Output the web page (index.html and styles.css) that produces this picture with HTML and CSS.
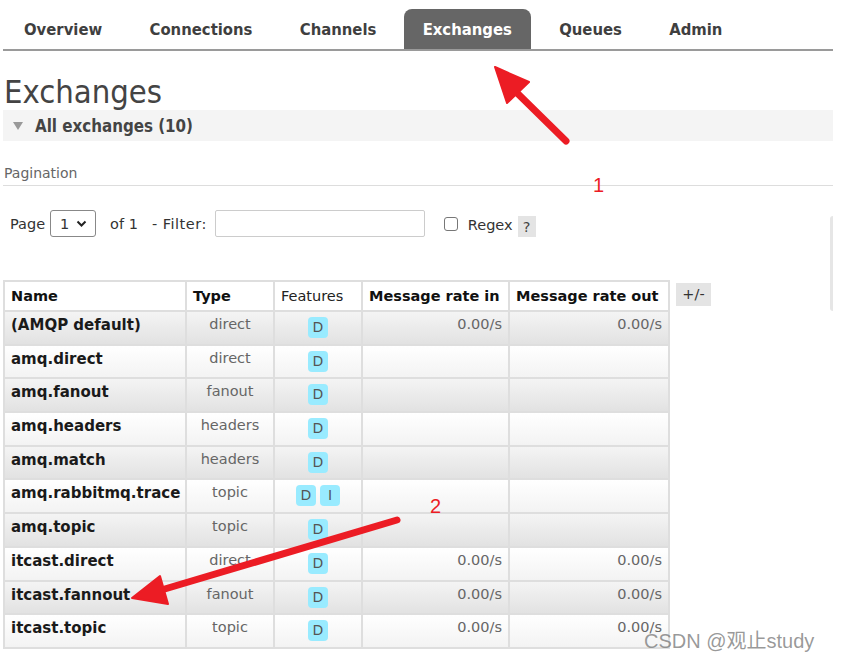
FILE: index.html
```html
<!DOCTYPE html>
<html lang="en">
<head>
<meta charset="utf-8">
<title>Exchanges</title>
<link rel="stylesheet" href="styles.css">
</head>
<body>
<div class="page">
  <nav class="tabs">
    <a class="tab">Overview</a>
    <a class="tab">Connections</a>
    <a class="tab">Channels</a>
    <a class="tab active">Exchanges</a>
    <a class="tab">Queues</a>
    <a class="tab">Admin</a>
  </nav>
  <h1 class="title">Exchanges</h1>
  <div class="section-head"><span class="tri"></span>All exchanges (10)</div>
  <div class="pag-title">Pagination</div>
  <div class="filter-row">
    <span>Page</span>
    <span class="select">1 <svg width="11" height="8" viewBox="0 0 11 8"><path d="M1.5 1.5 L5.5 5.5 L9.5 1.5" fill="none" stroke="#222" stroke-width="2"/></svg></span>
    <span class="of">of 1</span>
    <span class="flt">- Filter:</span>
    <span class="input"></span>
    <span class="checkbox"></span>
    <span class="regex">Regex</span>
    <span class="help">?</span>
  </div>
  <div class="table-row">
    <table class="list">
      <colgroup>
        <col class="c-name"><col class="c-type"><col class="c-feat"><col class="c-in"><col class="c-out">
      </colgroup>
      <thead>
        <tr><th class="l">Name</th><th class="l">Type</th><th class="l plain">Features</th><th class="l">Message rate in</th><th class="l">Message rate out</th></tr>
      </thead>
      <tbody>
        <tr class="odd"><td class="name">(AMQP default)</td><td class="type">direct</td><td class="feat"><span class="badge">D</span></td><td class="rate">0.00/s</td><td class="rate">0.00/s</td></tr>
        <tr class="even"><td class="name">amq.direct</td><td class="type">direct</td><td class="feat"><span class="badge">D</span></td><td class="rate"></td><td class="rate"></td></tr>
        <tr class="odd"><td class="name">amq.fanout</td><td class="type">fanout</td><td class="feat"><span class="badge">D</span></td><td class="rate"></td><td class="rate"></td></tr>
        <tr class="even"><td class="name">amq.headers</td><td class="type">headers</td><td class="feat"><span class="badge">D</span></td><td class="rate"></td><td class="rate"></td></tr>
        <tr class="odd"><td class="name">amq.match</td><td class="type">headers</td><td class="feat"><span class="badge">D</span></td><td class="rate"></td><td class="rate"></td></tr>
        <tr class="even"><td class="name">amq.rabbitmq.trace</td><td class="type">topic</td><td class="feat"><span class="badge">D</span><span class="badge">I</span></td><td class="rate"></td><td class="rate"></td></tr>
        <tr class="odd"><td class="name">amq.topic</td><td class="type">topic</td><td class="feat"><span class="badge">D</span></td><td class="rate"></td><td class="rate"></td></tr>
        <tr class="even"><td class="name">itcast.direct</td><td class="type">direct</td><td class="feat"><span class="badge">D</span></td><td class="rate">0.00/s</td><td class="rate">0.00/s</td></tr>
        <tr class="odd"><td class="name">itcast.fannout</td><td class="type">fanout</td><td class="feat"><span class="badge">D</span></td><td class="rate">0.00/s</td><td class="rate">0.00/s</td></tr>
        <tr class="even"><td class="name">itcast.topic</td><td class="type">topic</td><td class="feat"><span class="badge">D</span></td><td class="rate">0.00/s</td><td class="rate">0.00/s</td></tr>
      </tbody>
    </table>
    <span class="plusminus">+/-</span>
  </div>
</div>
<div class="edge"></div>
<svg class="annot" width="849" height="656" viewBox="0 0 849 656">
  <g fill="#ec1c24" stroke="#ec1c24" stroke-linecap="round" stroke-linejoin="round">
    <line x1="566" y1="141" x2="512" y2="88" stroke-width="7"/>
    <polygon points="495,67 529,82 507,103" stroke-width="2"/>
    <line x1="397" y1="520" x2="158" y2="591" stroke-width="7"/>
    <polygon points="132,598 160,576 168,604" stroke-width="2"/>
  </g>
</svg>
<span class="label l1">1</span>
<span class="label l2">2</span>
<div class="watermark">CSDN @观止study</div>
</body>
</html>
```

FILE: styles.css
```css
html, body {
  margin: 0;
  padding: 0;
  background: #fff;
}
body {
  width: 849px;
  height: 656px;
  overflow: hidden;
  position: relative;
  font-family: "DejaVu Sans", Verdana, sans-serif;
  font-size: 14.5px;
  color: #333;
}
.page {
  width: 830px;
  padding: 9px 0 0 3px;
}
.tabs {
  display: flex;
  gap: 8.3px;
  padding-left: 1px;
  border-bottom: 2px solid #9a9a9a;
  height: 40px;
}
.tab {
  display: flex;
  align-items: center;
  padding: 0 19px 0 20px;
  font-family: "DejaVu Sans Condensed", "DejaVu Sans", sans-serif;
  font-stretch: condensed;
  font-weight: bold;
  font-size: 16.5px;
  color: #3f3f3f;
  border-radius: 8px 8px 0 0;
}
.tab.active {
  background: #666;
  color: #fff;
  padding-left: 19px;
}
.title {
  margin: 24px 0 0 1px;
  font-family: "DejaVu Sans Condensed", "DejaVu Sans", sans-serif;
  font-stretch: condensed;
  font-weight: normal;
  font-size: 32.5px;
  line-height: 35px;
  color: #444;
}
.section-head {
  display: flex;
  align-items: center;
  height: 31px;
  background: #f4f4f4;
  font-family: "DejaVu Sans Condensed", "DejaVu Sans", sans-serif;
  font-stretch: condensed;
  font-weight: bold;
  font-size: 16.8px;
  color: #444;
}
.tri {
  width: 0;
  height: 0;
  border-left: 5px solid transparent;
  border-right: 5px solid transparent;
  border-top: 8px solid #999;
  margin: 0 12px 0 10px;
}
.pag-title {
  margin-top: 23px;
  padding: 0 0 3px 1px;
  border-bottom: 1px solid #ddd;
  font-size: 14px;
  line-height: 18px;
  color: #666;
}
.filter-row {
  display: flex;
  align-items: center;
  margin-top: 24px;
  padding-left: 7px;
  height: 27px;
  color: #333;
}
.select {
  display: flex;
  align-items: center;
  gap: 7px;
  box-sizing: border-box;
  width: 46px;
  height: 27px;
  margin-left: 5px;
  padding-left: 9px;
  border: 1px solid #888;
  border-radius: 3px;
}
.of { margin-left: 14px; }
.flt { margin-left: 14px; letter-spacing: 0.5px; }
.input {
  box-sizing: border-box;
  width: 210px;
  height: 27px;
  margin-left: 8px;
  border: 1px solid #ccc;
  border-radius: 2px;
}
.checkbox {
  box-sizing: border-box;
  width: 14px;
  height: 14px;
  margin: 0 10px 0 19px;
  border: 1px solid #777;
  border-radius: 3px;
}
.regex { margin-top: 3px; }
.help {
  margin-left: 5px;
  width: 18px;
  height: 21px;
  display: flex;
  align-items: center;
  justify-content: center;
  background: #e4e4e4;
  color: #444;
  align-self: flex-end;
}
.table-row {
  display: flex;
  align-items: flex-start;
  margin-top: 43px;
  padding-left: 0;
}
.list {
  border-collapse: collapse;
  table-layout: fixed;
  width: 665px;
}
.c-name { width: 182px; }
.c-type { width: 88px; }
.c-feat { width: 88px; }
.c-in { width: 147px; }
.c-out { width: 160px; }
.list th, .list td {
  border: 2px solid #dedede;
  padding: 0 6px;
  white-space: nowrap;
  overflow: hidden;
}
.list th {
  height: 28px;
  text-align: left;
  font-weight: bold;
  color: #111;
  background: #fff;
}
.list th.plain { font-weight: normal; color: #222; }
.list td {
  height: 33.7px;
  vertical-align: top;
  padding-top: 4px;
  box-sizing: border-box;
}
tr.odd td { background: linear-gradient(#f4f4f4, #e2e2e2); }
tr.even td { background: linear-gradient(#ffffff, #f3f3f3); }
.list td.name { font-weight: bold; color: #1a1a1a; font-size: 15px; }
.type { text-align: center; color: #666; }
.feat { text-align: center; }
.rate { text-align: right; color: #666; }
.badge {
  display: inline-block;
  width: 20px;
  height: 21px;
  line-height: 21px;
  margin: 1px 2px 0;
  border-radius: 4px;
  background: #99ebff;
  color: #555;
  text-align: center;
  font-size: 14px;
}
.plusminus {
  margin: 3px 0 0 6px;
  width: 35px;
  height: 23px;
  line-height: 23px;
  text-align: center;
  background: #e4e4e4;
  color: #333;
}
.edge {
  position: absolute;
  left: 830px;
  top: 216px;
  width: 3px;
  height: 95px;
  background: #e6e6e6;
  border-radius: 3px 0 0 3px;
}
.annot {
  position: absolute;
  left: 0;
  top: 0;
  pointer-events: none;
}
.label {
  position: absolute;
  font-family: "Liberation Sans", Arial, sans-serif;
  font-size: 20px;
  color: #ec1c24;
  line-height: 1;
}
.l1 { left: 593px; top: 175px; }
.l2 { left: 430px; top: 496px; }
.watermark {
  position: absolute;
  left: 644px;
  top: 625px;
  font-family: "Liberation Sans", "Noto Sans CJK SC", sans-serif;
  font-size: 20px;
  color: rgba(120, 120, 120, 0.75);
  white-space: nowrap;
}
```
